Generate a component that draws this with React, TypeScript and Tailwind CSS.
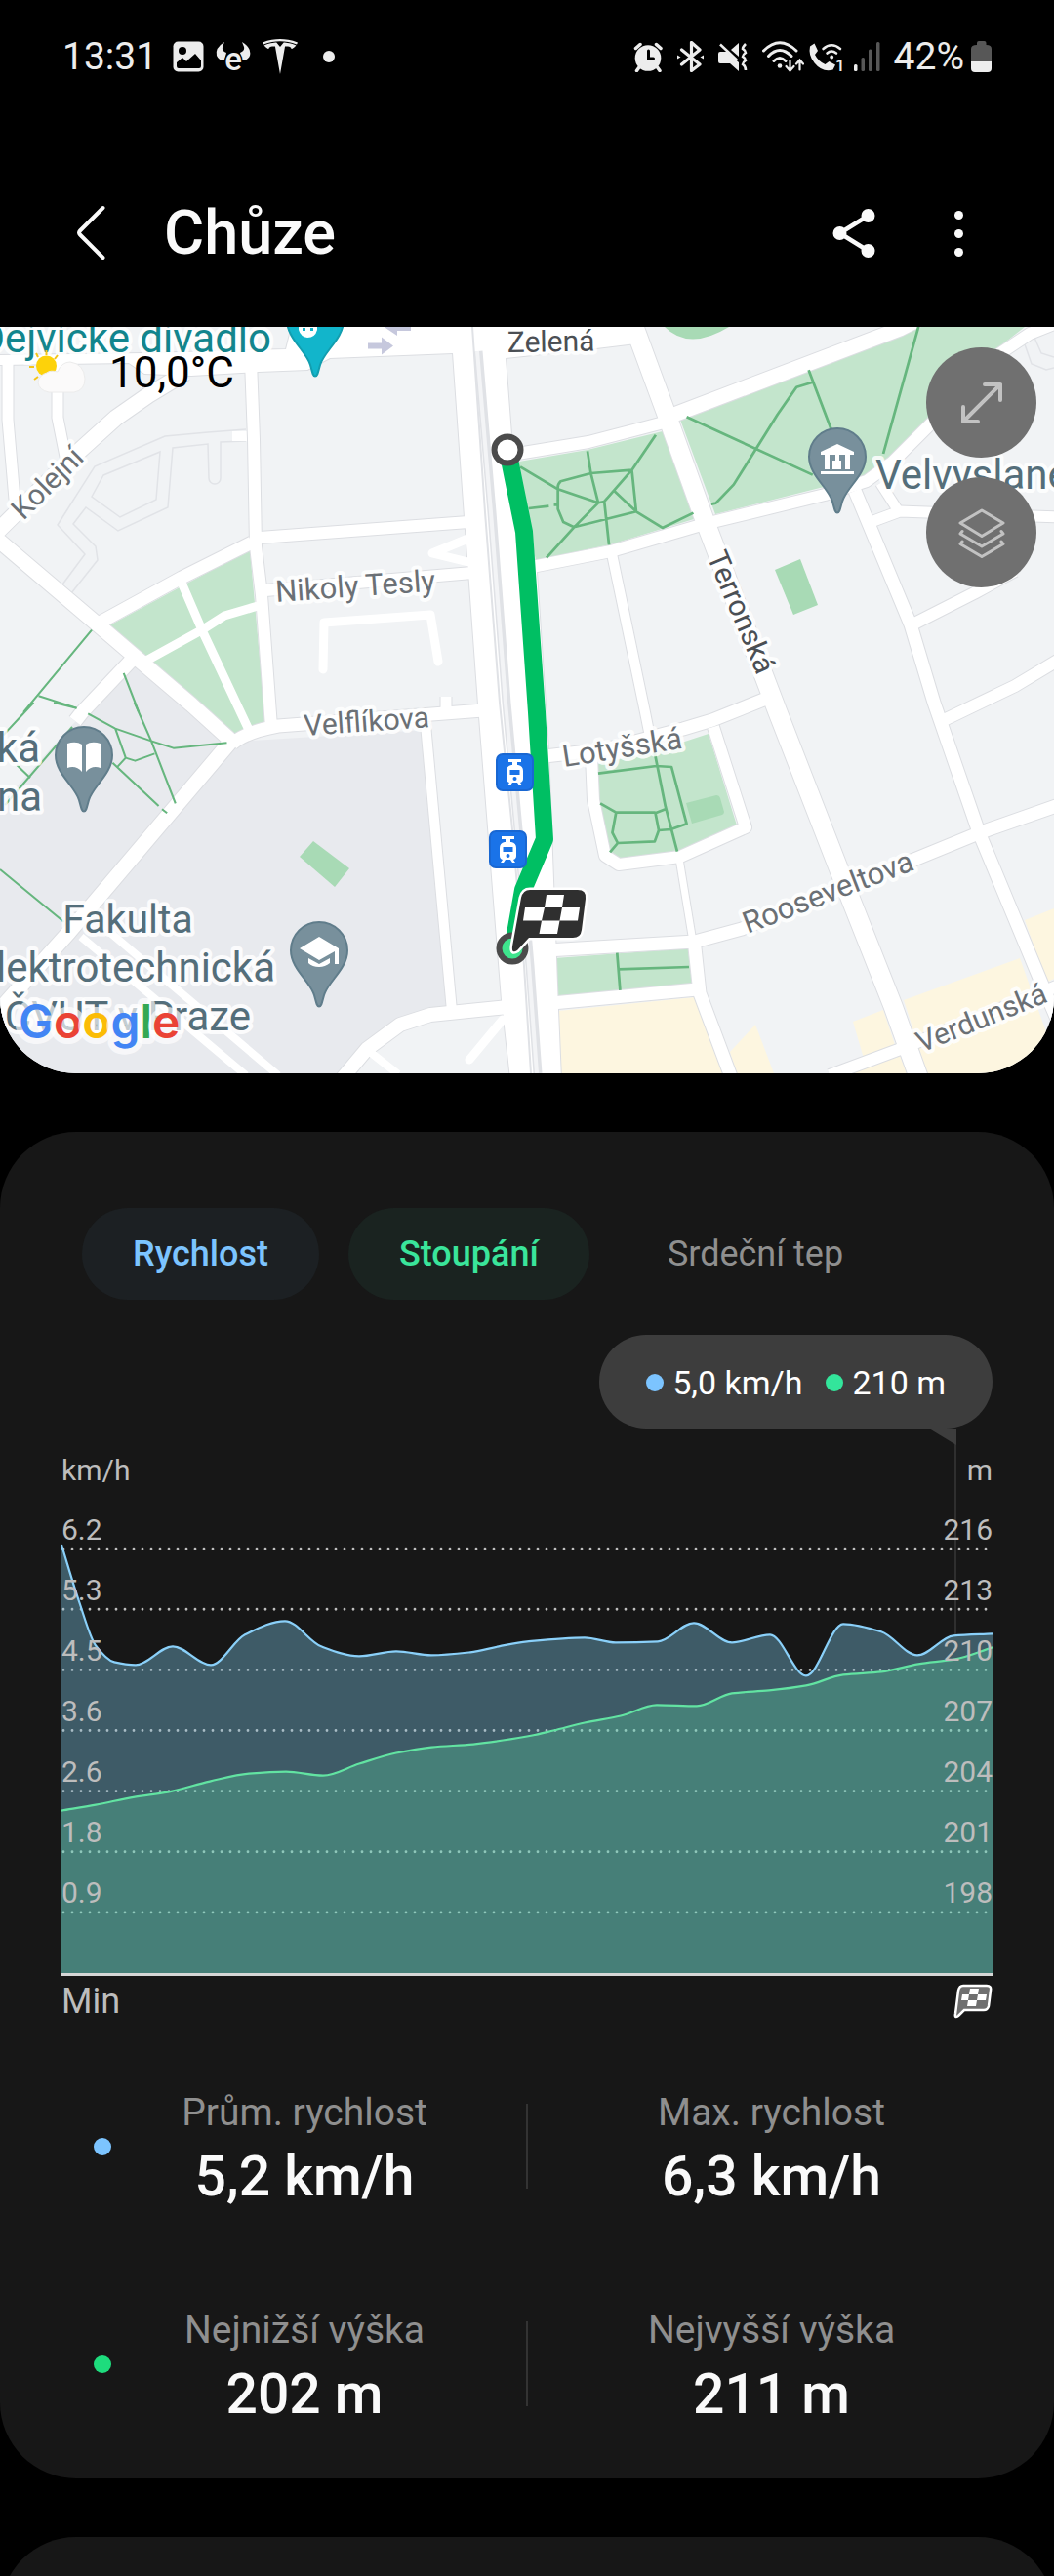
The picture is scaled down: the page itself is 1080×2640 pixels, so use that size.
import React from "react";
import { SiTesla } from "react-icons/si";

/* ---------- status bar icons ---------- */

const Gallery = () => (
  <svg className="h-8 w-8" viewBox="0 0 32 32" aria-hidden="true">
    <rect x="0.5" y="0.5" width="31" height="31" rx="5" fill="#ededed" />
    <circle cx="10" cy="10" r="4" fill="#000" />
    <path d="M4 22l6-5 4 4 9-8 6 7v6q0 2-2 2H6q-2 0-2-2z" fill="#000" />
  </svg>
);

const Bull = () => (
  <svg className="h-9 w-9 overflow-visible" viewBox="0 0 36 36" aria-hidden="true">
    <path d="M9 3Q-1 9 1 17q2 5 8 5l2-8Q6 12 7 8z" fill="#ededed" />
    <path d="M27 3q10 6 8 14-2 5-8 5l-2-8q5-2 4-6z" fill="#ededed" />
    <text x="18" y="32" textAnchor="middle" fontSize="33" fontWeight="500" fill="#ededed" stroke="#000" strokeWidth="3" paintOrder="stroke">
      e
    </text>
  </svg>
);

const Alarm = () => (
  <svg className="h-8 w-[30px]" viewBox="649 43 30 32" fill="none" stroke="#ededed" strokeLinecap="round" aria-hidden="true">
    <circle cx="664" cy="60.5" r="13.3" fill="#ededed" stroke="none" />
    <path d="M651.5 50.500l4.500-4M677 50.500l-4.500-4M655 70l-2.500 3.500M673.500 70l2.500 3.500" strokeWidth="3.500" />
    <path d="M664.500 53v8h5" stroke="#000" strokeWidth="3" />
  </svg>
);

const Bluetooth = () => (
  <svg className="h-8 w-[27px]" viewBox="694 43 27 32" fill="none" stroke="#ededed" strokeWidth="3.200" strokeLinecap="round" strokeLinejoin="round" aria-hidden="true">
    <path d="M698.500 52L717 67l-8.500 6.500v-29L717 52l-18.500 15" />
    <path d="M694 57.500l3.500 2-3.500 2zM721 57.500l-3.500 2 3.500 2z" fill="#ededed" stroke="none" />
  </svg>
);

const Mute = () => (
  <svg className="h-8 w-[30px]" viewBox="737 43 30 32" fill="none" stroke="#ededed" aria-hidden="true">
    <path d="M737 56q0-2 2-2h7l12 11v9l-9-8h-10q-2 0-2-2z" fill="#ededed" stroke="none" />
    <path d="M750 52l8-7v14z" fill="#ededed" stroke="none" />
    <path d="M739 46.500l17 16" strokeWidth="2.500" />
    <path d="M765 46q-3 3-3 5 3 2 3 4-3 2-3 4 3 2 3 4-3 2-3 4 3 2 3 6" strokeWidth="2.600" />
  </svg>
);

const Wifi = () => (
  <svg className="h-8 w-[43px]" viewBox="781 43 43 32" fill="none" stroke="#ededed" strokeWidth="3" strokeLinecap="round" aria-hidden="true">
    <path d="M782.500 53Q799 36.500 816 53M787.500 58.500Q799 46.500 811 58.500M793 63.500q6-6 12 0" />
    <circle cx="799" cy="68.500" r="2.300" fill="#ededed" stroke="none" />
    <path d="M809.500 63v10m-4-4l4 4.500 4-4.500M819.500 72.500V63m-3.500 3.500l3.500-4 3.500 4" strokeWidth="2.200" />
  </svg>
);

const WifiCall = () => (
  <svg className="h-8 w-[37px] overflow-visible" viewBox="829 43 37 32" fill="none" stroke="#ededed" strokeWidth="2.600" strokeLinecap="round" aria-hidden="true">
    <path d="M830 48.500l4.500-3 3.500 7.500-3 4q3.500 7 10.500 10l4-3 6.500 3.500-2.500 5q-11 3-19-7-6.500-8-4.500-17z" fill="#ededed" stroke="none" />
    <path d="M843.500 51q8.500-7.500 17.500 0M847.500 55.500q4.500-4 9.500 0" />
    <circle cx="852.200" cy="59.500" r="1.900" fill="#ededed" stroke="none" />
    <text x="856" y="74" fontSize="17" fontWeight="500" fill="#ededed" stroke="none">
      1
    </text>
  </svg>
);

const Signal = () => (
  <svg className="h-8 w-7" viewBox="875 43 28 32" aria-hidden="true">
    <rect x="875" y="67" width="3.500" height="7" rx="1.500" fill="#ededed" />
    <rect x="882.500" y="60" width="3.500" height="14" rx="1.500" fill="#575757" />
    <rect x="890" y="51.500" width="3.500" height="22.500" rx="1.500" fill="#575757" />
    <rect x="898" y="44" width="3.500" height="30" rx="1.500" fill="#575757" />
  </svg>
);

const Battery = () => (
  <svg className="h-8 w-[21px]" viewBox="995 42 21 32" aria-hidden="true">
    <path d="M1001 46v-2q0-2 2-2h5.500q2 0 2 2v2q5.500 0 5.500 4v13h-21V50q0-4 6-4z" fill="#575757" />
    <path d="M995 63h21v7q0 4-4 4h-13q-4 0-4-4z" fill="#ededed" />
  </svg>
);

/* ---------- map ---------- */

type Road = [d: string, width: number];

const ROADS: Road[] = [
  ["M-5 551L0 555 100 640 142 676 196 722 238 760", 15],
  ["M-5 547L0 542 78 465 119 428 152 405 190 382", 16],
  ["M8 373V430L15 512", 11],
  ["M59 370V428L67 468", 11],
  ["M257 370L260 450 262 560 268 610 278 745", 12],
  ["M266 551L480 535", 12],
  ["M258 556L186 592 104 637", 13],
  ["M272 605L484 587", 12],
  ["M136 675L84 730 77 739", 14],
  ["M238 762Q252 750 285 744L495 728", 13],
  ["M457 714V733", 11],
  ["M238 758L71 955 -5 1040", 15],
  ["M436 742L463 1036", 10],
  ["M350 1106L376 1075 410 1050 441 1040 520 1032", 14],
  ["M650 335L682 422 722 533 797 730 860 892 915 1031 942 1106", 19],
  ["M688 426L922 337 940 328", 15],
  ["M684 432L603 453 530 465", 12],
  ["M545 581L626 565 722 537 845 507 888 493 915 473 953 435 1025 362 1055 342 1085 330", 12],
  ["M626 563L661 730 667 760", 10],
  ["M876 503L933 640 957 720 1003 853 1067 1007 1088 1056", 13],
  ["M895 534L922 524 1085 530", 11],
  ["M902 495L922 526", 10],
  ["M933 641L998 608 1040 585", 12],
  ["M965 739L1040 703 1085 676", 12],
  ["M558 775L620 768 700 747 730 738 795 712", 13],
  ["M606 775L608 820 620 877 634 886 697 878 764 848 731 745", 12],
  ["M696 880L710 965", 7],
  ["M560 974L712 965 760 952 939 880 1005 853 1085 825", 13],
  ["M566 1028L714 1014", 13],
  ["M711 962L717 1018 750 1106", 13],
  ["M850 1102L920 1076 1085 1010", 12],
];

const BOULEVARD =
  "M462 330L464 362 476 530 490 722 514 1025 523 1106H575L572 1035 562 768 550 586 524 445 518 367 611 357 652 352V330z";
const TOP_ROAD =
  "M-4 364L148 362 293 358 300 330H482V362H464L338 367 315 379 265 381 196 385 148 383 132 372 64 373-4 374z";

const Pin = ({ x, y, fill, edge, children }: { x: number; y: number; fill: string; edge: string; children?: React.ReactNode }) => (
  <g transform={`translate(${x} ${y})`}>
    <path
      d="M0 57.500C-2.500 57.500-3 53-5 46-9 32-29 19-29 0A29 29 0 0 1 29 0C29 19 9 32 5 46 3 53 2.500 57.500 0 57.500z"
      fill={fill}
      stroke={edge}
      strokeWidth="2"
    />
    {children}
  </g>
);

const Tram = ({ x, y }: { x: number; y: number }) => (
  <g transform={`translate(${x} ${y})`}>
    <rect x="1" y="1" width="37" height="37" rx="6" fill="#1a73e8" stroke="#1967d2" strokeWidth="2" />
    <path d="M13 6h13v3h-4v4h-5V9h-4zM16 12h7q5 1 5 6v8q0 3-3 4l2 3h-3l-2-3h-5l-2 3h-3l2-3q-3-1-3-4v-8q0-5 5-6z" fill="#fff" />
    <rect x="14.500" y="17" width="10" height="5" fill="#1a73e8" />
    <circle cx="19.500" cy="26" r="2" fill="#1a73e8" />
  </g>
);

type LabelProps = { x: number; y: number; size?: number; angle?: number; anchor?: "start" | "middle" | "end"; color?: string; children: string };

const Label = ({ x, y, size = 30, angle = 0, anchor = "start", color = "#6b7075", children }: LabelProps) => (
  <text
    transform={`translate(${x} ${y}) rotate(${angle})`}
    fontSize={size}
    textAnchor={anchor}
    fill={color}
    stroke="#fff"
    strokeOpacity="0.85"
    strokeWidth="8"
    strokeLinejoin="round"
    paintOrder="stroke"
  >
    {children}
  </text>
);

const CityMap = () => (
  <svg className="block h-auto w-full" viewBox="0 335 1080 765" role="img" aria-label="Mapa trasy">
    <rect x="0" y="335" width="1080" height="765" fill="#f1f3f5" />
    <path d="M136 680L241 760 436 748 463 1033 441 1040 376 1075 350 1104H0V825L72 745z" fill="#e8eaee" />

    <g fill="#c3e5cc">
      <path d="M112 641L256 563 272 740 241 752z" />
      <path d="M526 474L602 461 679 442 711 532 626 558 549 574z" />
      <path d="M697 430L941 335H1050L1022 357 957 427 907 477 884 492 840 500 733 527z" />
      <path d="M612 783L671 770 726 752 755 846 695 873 634 880 624 875 614 820z" />
      <path d="M568 982L705 972 709 1008 571 1021z" />
    </g>
    <g fill="#fdf6e0">
      <path d="M572 1036L712 1022 741 1100H575z" />
      <path d="M748 1078L774 1050 793 1100H755z" />
      <path d="M874 1047L905 1035 919 1077 886 1088z" />
      <path d="M926 1025L1045 982 1080 1080V1100H950z" />
      <path d="M1050 943L1080 931V1003L1072 1007z" />
      <path d="M870 1100L922 1082 929 1100z" />
    </g>
    <g fill="#a8dab5">
      <path d="M794 584L820 573 838 620 813 630z" />
      <path d="M321 862L358 890 343 909 307 878z" />
      <path d="M703 823L734 815Q737 815 738 818L742 832Q742 834 740 835L709 844z" />
      <path d="M681 335Q706 360 747 335z" />
    </g>

    <g fill="none" stroke="#e1e3e7" strokeWidth="1.500">
      <path d="M64 599L87 568 59 538 97 478 169 447 213 443 252 440M73 608L100 574 98 560 75 537 88 520 121 544 172 520 177 459 213 455 214 490A6 6 0 0 0 226 490V453L252 452" />
      <path d="M106 487L164 463 160 512 123 530 94 509z" />
      <path d="M1050 353L1057 373 1072 379 1080 377M1060 346L1067 362 1080 366" />
    </g>
    <path d="M238 447H254" stroke="#fff" strokeWidth="10" />

    <g fill="none" stroke="#dcdee2" strokeLinejoin="round">
      {ROADS.map(([d, w]) => (
        <path key={d} d={d} strokeWidth={w + 2} />
      ))}
      <path d={BOULEVARD} strokeWidth="2" />
      <path d={TOP_ROAD} strokeWidth="2" />
    </g>
    <g fill="none" stroke="#fff" strokeLinejoin="round">
      {ROADS.map(([d, w]) => (
        <path key={d} d={d} strokeWidth={w} />
      ))}
      <path d={BOULEVARD} fill="#fff" stroke="none" />
      <path d={TOP_ROAD} fill="#fff" stroke="none" />
      <path d="M186 597L208 648 255 748M150 677L208 645 230 631 264 621" strokeWidth="9" />
      <path d="M331 686L332 638 441 630 449 678M515 1045L481 1086" strokeWidth="9" strokeLinecap="round" />
      <path d="M482 551L443 567 484 577" strokeWidth="9" />
      <path d="M83 960L252 1102M112 955L285 1102M379 1078L408 1101" strokeWidth="8" />
    </g>

    <g fill="none" strokeLinejoin="round">
      <path d="M490 360L504 525 519 720 531 850 543 990 551 1100" stroke="#e0e2e6" strokeWidth="9" />
      <path d="M489 360L503 525 518 720 530 850 542 990 550 1100" stroke="#f3f4f6" strokeWidth="4" />
      <path d="M484 335L497 525 512 720 525 850 537 990 544 1100" stroke="#e0e2e6" strokeWidth="2" />
    </g>

    <g fill="#c6c8dd">
      <path d="M377 351.500h14v-6l12 9-12 9v-6h-14z" />
      <path d="M421 339h-14v5l-12-8V328h26z" />
    </g>

    <g fill="none" stroke="#66b67e" strokeWidth="8" strokeLinejoin="round">
      <path
        transform="translate(540 330) scale(.3444 .3333)"
        d="M475 292L850 470M838 148L905 330M850 185L802 200L745 285L615 500L562 557L548 560M1165 14L1060 405M383 347L312 455L230 552L212 556L92 514L-20 445M180 397L190 465L212 556M312 455L190 465L100 490Q90 500 92 514L92 575L108 615L140 631L325 583L312 455M260 520L325 583L403 633L495 587M230 552L244 685M212 556L140 631L58 725M5 573L65 566M80 562H92"
      />
      <path transform="translate(0 330) scale(.3444 .3333)" d="M273 947L70 1200M115 1150L228 1187M368 1080L413 1200" strokeWidth="6" />
      <path
        transform="translate(0 720) scale(.3444 .3333)"
        d="M100 0L10 100M160 0L228 17M262 34L343 80L450 118L516 140L675 124M400 0L450 118L522 310M343 80L374 170L402 179L460 157M374 170L350 197M335 185L472 318M482 328L497 340M215 75L15 315M50 192L90 232M0 513L190 674"
        strokeWidth="6"
      />
      <path
        transform="translate(540 720) scale(.3444 .3333)"
        d="M212 218L385 195L430 198L475 373L428 390L392 393L382 340L412 328M378 145L412 320L447 458M218 310L265 338H382M265 338L254 400L270 432L380 427L392 393M270 432L247 460M268 770L277 885M272 820L482 813"
      />
    </g>

    <Label x={283} y={617} size={31} angle={-4}>Nikoly Tesly</Label>
    <Label x={312} y={754} angle={-4}>Velflíkova</Label>
    <Label x={24} y={534} angle={-45} size={30}>Kolejní</Label>
    <Label x={520} y={361} size={30} angle={-1} color="#4b4f54">Zelená</Label>
    <Label x={724} y={570} angle={67} color="#4b4f54">Terronská</Label>
    <Label x={578} y={786} angle={-9} size={31}>Lotyšská</Label>
    <Label x={766} y={957} angle={-21} size={31}>Rooseveltova</Label>
    <Label x={944} y={1079} size={30} angle={-22}>Verdunská</Label>
    <Label x={278} y={361} size={42} anchor="end" color="#12858d">Dejvické divadlo</Label>
    <Label x={897} y={501} size={42} color="#546e7a">Velvyslane</Label>
    <Label x={41} y={781} size={42} anchor="end" color="#546e7a">ká</Label>
    <Label x={43} y={831} size={42} anchor="end" color="#546e7a">na</Label>
    <Label x={131} y={956} size={41} anchor="middle" color="#546e7a">Fakulta</Label>
    <Label x={282} y={1006} size={42} anchor="end" color="#546e7a">lektrotechnická</Label>
    <Label x={131} y={1056} size={42} anchor="middle" color="#546e7a">ČVUT v Praze</Label>

    <Pin x={323} y={328} fill="#12b5cb" edge="#129eaf">
      <path d="M-17 0H2V10Q0 18-8 18-15 17-17 10z" fill="#fff" />
      <path d="M-13 8h3v3h-3zM-5 8h3v3h-3z" fill="#12b5cb" />
    </Pin>
    <Pin x={86} y={774} fill="#78909c" edge="#607d8b">
      <path d="M-17-12Q-8-15-2-11V17Q-8 10-17 13zM17-12Q8-15 2-11V17Q8 10 17 13z" fill="#fff" />
    </Pin>
    <Pin x={327} y={974} fill="#78909c" edge="#607d8b">
      <path d="M0-14L20-2V14H16V1L0 10-20-2z" fill="#fff" />
      <path d="M-11 8L0 14 11 8V13Q6 17 0 17-7 17-11 13z" fill="#fff" />
    </Pin>
    <Pin x={858} y={468} fill="#78909c" edge="#607d8b">
      <path d="M0-13L17-5V-2H-17V-5zM-13-2H-8V13H-13zM8-2H13V13H8zM-5 4H4V13H-5zM-17 15H17V18H-17zM-2-2H2V5H-2z" fill="#fff" />
    </Pin>

    <path d="M520 461L537 545 550 730 558 860 536 912 526 968" fill="none" stroke="#00bf63" strokeWidth="18" strokeLinejoin="round" />
    <Tram x={508} y={772} />
    <Tram x={501} y={851} />
    <circle cx="520" cy="461" r="13.500" fill="#fff" stroke="#4b4b4b" strokeWidth="6" />
    <circle cx="525" cy="972" r="13.500" fill="#3ee58d" stroke="#4b4b4b" strokeWidth="6" />

    <g>
      <path
        d="M543 912H592Q601 912 600 921L596 953Q595 961 587 961H542L530 974Q524 978 525 970L534 920Q536 912 543 912z"
        fill="#2f2f2f"
        stroke="#fff"
        strokeWidth="5"
        strokeLinejoin="round"
        paintOrder="stroke"
      />
      <path d="M560 917H578L576 930H558zM538 930H558L555 943.500H536zM576 930H594L592 943.500H573.500zM555 943.500H573.500L571 957H552.500z" fill="#fff" />
    </g>

    <text
      x="19"
      y="1064"
      fontFamily="Inter, sans-serif"
      fontSize="48"
      fontWeight="600"
      stroke="#fff"
      strokeOpacity="0.68"
      strokeWidth="12"
      strokeLinejoin="round"
      paintOrder="stroke"
    >
      <tspan fill="#4285f4">G</tspan>
      <tspan fill="#ea4335">o</tspan>
      <tspan fill="#fbbc05">o</tspan>
      <tspan fill="#4285f4">g</tspan>
      <tspan fill="#34a853">l</tspan>
      <tspan fill="#ea4335">e</tspan>
    </text>
  </svg>
);

const PartlyCloudy = () => (
  <svg className="h-12 w-16" viewBox="26 360 64 48" aria-hidden="true">
    <path d="M47.500 361v5M37 364l2 4M59 366l-3 4M30 378h5M35 391l4-3" stroke="#f5c518" strokeWidth="2" />
    <circle cx="47.500" cy="377" r="10.500" fill="#fdd20a" />
    <path d="M50 404H76Q87 402 87 390 86 375 72 373 63 373 59 383 51 381 48 384 40 386 39 394 40 402 50 404z" fill="#fbfafa" stroke="#ececec" />
  </svg>
);

/* ---------- chart ---------- */

type Point = [x: number, y: number];

const SPEED: Point[] = [
  [0, 58], [18, 116], [35, 161], [54, 178], [76, 181], [114, 162], [153, 181], [188, 150], [229, 136], [266, 162],
  [305, 172], [343, 167], [379, 171], [419, 168], [448, 162], [477, 157], [536, 153], [568, 158], [611, 157], [648, 138],
  [687, 158], [726, 150], [763, 192], [801, 139], [840, 147], [877, 171], [914, 151], [954, 149],
];

const ALTITUDE: Point[] = [
  [0, 330], [35, 324], [75, 316], [109, 311], [152, 300], [192, 292], [230, 290], [268, 294], [305, 282], [343, 271],
  [379, 265], [422, 262], [477, 254], [504, 248], [536, 240], [573, 233], [610, 222], [651, 223], [687, 210], [725, 207],
  [763, 202], [801, 191], [840, 188], [878, 180], [916, 175], [954, 163],
];

/* Monotone cubic curve: flat at local extremes, smooth elsewhere. */
function curve(points: Point[]): string {
  const slopes = points.slice(1).map(([x, y], i) => (y - points[i][1]) / (x - points[i][0]));
  const tangents = points.map((_, i) => {
    const a = slopes[i - 1];
    const b = slopes[i];
    if (a === undefined) return b;
    if (b === undefined) return a;
    return a * b <= 0 ? 0 : (2 * a * b) / (a + b);
  });
  return points.reduce((d, [x, y], i) => {
    if (i === 0) return `M${x} ${y}`;
    const [px, py] = points[i - 1];
    const h = (x - px) / 3;
    return `${d}C${px + h} ${py + tangents[i - 1] * h} ${x - h} ${y - tangents[i] * h} ${x} ${y}`;
  }, "");
}

const TICKS = [
  ["6.2", "216"],
  ["5.3", "213"],
  ["4.5", "210"],
  ["3.6", "207"],
  ["2.6", "204"],
  ["1.8", "201"],
  ["0.9", "198"],
];

const speedLine = curve(SPEED);
const altitudeLine = curve(ALTITUDE);
const gridLines = TICKS.map((_, i) => `M2 ${62 * (i + 1)}H952`).join("");

const Dots = ({ color, clip }: { color: string; clip?: string }) => (
  <path d={gridLines} stroke={color} strokeWidth="2.800" strokeDasharray="0 9" strokeLinecap="round" clipPath={clip} />
);

const Plot = () => (
  <svg className="absolute inset-0 h-full w-full" viewBox="0 0 954 496" preserveAspectRatio="none" fill="none" role="img" aria-label="Rychlost a stoupání">
    <defs>
      <clipPath id="speed-area">
        <path d={`${speedLine}V496H0z`} />
      </clipPath>
      <clipPath id="altitude-area">
        <path d={`${altitudeLine}V496H0z`} />
      </clipPath>
    </defs>
    <Dots color="#bdbdbd" />
    <path d={`${speedLine}V496H0z`} fill="#3e5b67" />
    <Dots color="#a8bcc5" clip="url(#speed-area)" />
    <path d={`${altitudeLine}V496H0z`} fill="#467f78" />
    <Dots color="#8fc8bb" clip="url(#altitude-area)" />
    <path d="M916 0V150" stroke="#2f2f2f" strokeWidth="2" />
    <path d={speedLine} stroke="#8ad0f9" strokeWidth="2.200" />
    <path d={altitudeLine} stroke="#62e3a2" strokeWidth="2.200" />
  </svg>
);

const FinishFlag = () => (
  <svg className="h-9 w-10" viewBox="0 0 40 36" aria-label="Cíl">
    <path d="M10 2H34Q39 2 38 7L36 23Q35 27 31 27H11L5 33Q1 36 2 31L5 7Q6 2 10 2z" fill="#6f6f6f" stroke="#fff" strokeWidth="2.500" />
    <path d="M17 5H26L25 11H16zM9 11H16L15 17H8zM25 11H34L33 17H24zM15 17H24L23 23H14z" fill="#fff" />
  </svg>
);

/* ---------- statistics ---------- */

const Stat = ({ label, value }: { label: string; value: string }) => (
  <div className="flex flex-col items-center gap-[10px] pt-2">
    <dt className="text-[39px] leading-[45px] text-[#8f8f8f]">{label}</dt>
    <dd className="text-[57px] font-medium leading-[66px] text-[#fafafa]">{value}</dd>
  </div>
);

const StatRow = ({ dot, items }: { dot: string; items: [string, string][] }) => (
  <dl className="grid grid-cols-2 items-center">
    <div className="flex items-center pl-24">
      <span className={`h-[18px] w-[18px] shrink-0 rounded-full ${dot}`} />
      <div className="flex-1 pr-[30px]">
        <Stat label={items[0][0]} value={items[0][1]} />
      </div>
    </div>
    <div className="flex items-center">
      <span className="-ml-px h-[87px] w-[2px] bg-[#333333]" />
      <div className="flex-1 pr-10">
        <Stat label={items[1][0]} value={items[1][1]} />
      </div>
    </div>
  </dl>
);

export default function App() {
  return (
    <div className="min-h-screen w-full overflow-hidden bg-black font-['Roboto',sans-serif] text-[#fafafa]">
      <div className="flex h-[116px] items-center justify-between px-16 text-[39px] leading-[46px] text-[#ededed]">
        <div className="flex items-center">
          <span>13:31</span>
          <div className="ml-4 flex items-center gap-3">
            <Gallery />
            <Bull />
            <SiTesla className="h-9 w-9" aria-hidden="true" />
          </div>
          <span className="ml-[26px] h-3 w-3 rounded-full bg-[#ededed]" />
        </div>
        <div className="flex items-center">
          <div className="flex items-center gap-[15px]">
            <Alarm />
            <Bluetooth />
            <Mute />
            <Wifi />
          </div>
          <div className="ml-[5px] flex items-center gap-[9px]">
            <WifiCall />
            <Signal />
          </div>
          <span className="ml-[13px] mr-[7px]">42%</span>
          <Battery />
        </div>
      </div>

      <header className="flex items-center pb-[60px] pl-[76px] pr-[82px] pt-[87px]">
        <button type="button" aria-label="Zpět" className="flex h-[72px] w-9 items-center">
          <svg className="h-[60px] w-9" viewBox="0 0 36 60" fill="none" stroke="#fafafa" strokeWidth="4" strokeLinecap="round" strokeLinejoin="round">
            <path d="M29.500 4L6 27.500Q4 29.500 6 31.500L29.500 55" />
          </svg>
        </button>
        <h1 className="ml-14 flex-1 text-[63px] font-medium leading-[72px]">Chůze</h1>
        <button type="button" aria-label="Sdílet" className="flex h-[72px] w-12 items-center justify-center">
          <svg className="h-[52px] w-[44px]" viewBox="0 0 44 52" fill="#fafafa" stroke="#fafafa">
            <path d="M36.500 8L7.500 26l29 18" fill="none" strokeWidth="4.500" />
            <circle cx="36.500" cy="8" r="7" stroke="none" />
            <circle cx="7.500" cy="26" r="7" stroke="none" />
            <circle cx="36.500" cy="44" r="7" stroke="none" />
          </svg>
        </button>
        <button type="button" aria-label="Další možnosti" className="ml-[67px] flex h-[72px] w-8 flex-col items-center justify-center gap-[10px]">
          <span className="h-[9px] w-[9px] rounded-full bg-[#fafafa]" />
          <span className="h-[9px] w-[9px] rounded-full bg-[#fafafa]" />
          <span className="h-[9px] w-[9px] rounded-full bg-[#fafafa]" />
        </button>
      </header>

      <section className="relative overflow-hidden rounded-b-[78px]">
        <CityMap />
        <div className="absolute left-[26px] top-[22px] flex items-center gap-[22px] text-[44px] leading-[50px] text-black">
          <PartlyCloudy />
          <span>10,0°C</span>
        </div>
        <div className="absolute right-[18px] top-[21px] flex flex-col gap-5">
          <button type="button" aria-label="Zvětšit mapu" className="flex h-[113px] w-[113px] items-center justify-center rounded-full bg-[#707070]">
            <svg className="h-[46px] w-[46px]" viewBox="0 0 46 46" fill="none" stroke="#c2c2c2" strokeWidth="4" strokeLinecap="round" strokeLinejoin="round">
              <path d="M4 42L42 4M26 4H42V20M4 27V42H19" />
            </svg>
          </button>
          <button type="button" aria-label="Vrstvy mapy" className="flex h-[113px] w-[113px] items-center justify-center rounded-full bg-[#707070]">
            <svg className="h-[52px] w-[50px]" viewBox="0 0 50 52" fill="none" stroke="#c2c2c2" strokeWidth="3" strokeLinecap="round" strokeLinejoin="round">
              <path d="M25 3L47 16 25 29.500 3 16zM5 24.500L3 27 25 40 47 27 45 24.500M5 35L3 37.500 25 50.500 47 37.500 45 35" />
            </svg>
          </button>
        </div>
      </section>

      <main className="mt-[60px] rounded-[78px] bg-[#171717] pb-[53px] pt-[78px]">
        <div className="flex gap-[30px] px-[84px] text-[36px] leading-[42px]">
          <button type="button" aria-pressed="true" className="h-[94px] rounded-full bg-[#1c2023] px-[52px] font-medium text-[#7cc4ff]">
            Rychlost
          </button>
          <button type="button" aria-pressed="true" className="h-[94px] rounded-full bg-[#1a2320] px-[52px] font-medium text-[#3ae59b]">
            Stoupání
          </button>
          <button type="button" aria-pressed="false" className="h-[94px] rounded-full px-[50px] text-[#8f8f8f]">
            Srdeční tep
          </button>
        </div>

        <div className="mx-[63px] mt-9">
          <div className="relative flex justify-end">
            <div className="flex h-24 items-center gap-6 rounded-full bg-[#3d3d3d] px-12 pt-[2px] text-[34px] leading-10 text-white">
              <span className="flex items-center gap-[9px]">
                <span className="h-[18px] w-[18px] rounded-full bg-[#7cc4ff]" />
                5,0 km/h
              </span>
              <span className="flex items-center gap-[9px]">
                <span className="h-[18px] w-[18px] rounded-full bg-[#33e59b]" />
                210 m
              </span>
            </div>
            <svg className="absolute right-[37px] top-24 h-[61px] w-7" viewBox="0 0 28 61" aria-hidden="true">
              <path d="M27 0V61" stroke="#2f2f2f" strokeWidth="2" />
              <path d="M0 0H28V17z" fill="#3d3d3d" />
            </svg>
          </div>
          <div className="flex justify-between pt-[25px] text-[30px] leading-9 text-[#bdbdbd]">
            <span>km/h</span>
            <span>m</span>
          </div>
          <div className="relative border-b-[3px] border-[#d6d6d6] pb-[63px]">
            <Plot />
            <ul className="relative text-[30px] leading-9 text-[#bdbdbd]">
              {TICKS.map(([speed, altitude]) => (
                <li key={speed} className="flex h-[62px] items-end justify-between pb-px">
                  <span>{speed}</span>
                  <span>{altitude}</span>
                </li>
              ))}
            </ul>
          </div>
          <div className="flex items-center justify-between pt-[5px] text-[36px] leading-[42px] text-[#bdbdbd]">
            <span>Min</span>
            <FinishFlag />
          </div>
        </div>

        <div className="mt-[63px] flex flex-col gap-[94px]">
          <StatRow
            dot="bg-[#7cc4ff]"
            items={[
              ["Prům. rychlost", "5,2 km/h"],
              ["Max. rychlost", "6,3 km/h"],
            ]}
          />
          <StatRow
            dot="bg-[#1edc7d]"
            items={[
              ["Nejnižší výška", "202 m"],
              ["Nejvyšší výška", "211 m"],
            ]}
          />
        </div>
      </main>

      <div className="mt-[60px] h-10 overflow-hidden">
        <div className="h-40 rounded-[78px] bg-[#171717]" />
      </div>
    </div>
  );
}
